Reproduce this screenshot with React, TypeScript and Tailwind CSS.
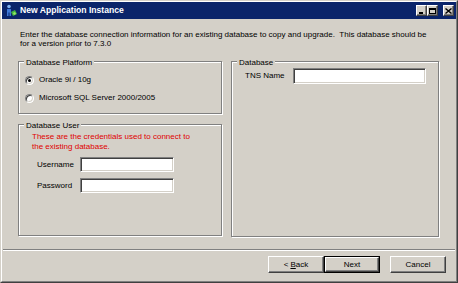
import React from 'react';

const raised =
  'border border-t-white border-l-white border-r-[#404040] border-b-[#404040] shadow-[inset_-1px_-1px_0_#808080]';
const sunken =
  'bg-white border border-t-[#808080] border-l-[#808080] border-r-white border-b-white shadow-[inset_1px_1px_0_#404040,inset_-1px_-1px_0_#d4d0c8]';

type GroupProps = { title: string; className?: string; children?: React.ReactNode };

const GroupBox = ({ title, className = '', children }: GroupProps) => (
  <div
    className={`relative border border-[#808080] shadow-[inset_1px_1px_0_#fff,1px_1px_0_#fff] ${className}`}
  >
    <span className="absolute -top-[4px] left-[5px] px-[2px] bg-[#d4d0c8] leading-[9px]">{title}</span>
    {children}
  </div>
);

const Radio = ({ label, checked }: { label: string; checked?: boolean }) => (
  <div className="flex items-center h-[10px]">
    <span
      className={`w-[9px] h-[9px] rounded-full flex items-center justify-center ${sunken}`}
    >
      {checked && <span className="w-[3px] h-[3px] rounded-full bg-black" />}
    </span>
    <span className="ml-[5px] whitespace-nowrap">{label}</span>
  </div>
);

const Button = ({ children, isDefault }: { children: React.ReactNode; isDefault?: boolean }) => (
  <div className={`w-[56px] h-[17px] ${isDefault ? 'border border-black' : ''}`}>
    <div className={`w-full h-full flex items-center justify-center bg-[#d4d0c8] ${raised}`}>
      {children}
    </div>
  </div>
);

const CaptionButton = ({ children }: { children: React.ReactNode }) => (
  <div className={`w-[11px] h-[11px] bg-[#d4d0c8] flex items-center justify-center ${raised}`}>
    {children}
  </div>
);

export default function App() {
  return (
    <div className="w-[458px] h-[283px] bg-[#d4d0c8] border border-t-[#d4d0c8] border-l-[#d4d0c8] border-r-[#404040] border-b-[#404040] font-['Liberation_Sans',Arial,sans-serif] text-[8px] text-black">
      <div className="w-full h-full flex flex-col border border-t-white border-l-white border-r-[#808080] border-b-[#808080]">
        {/* title bar */}
        <div className="h-[17px] bg-[#0a246a] flex items-center pl-[3px] pr-[2px]">
          <svg width="13" height="13" viewBox="0 0 13 13">
            <circle cx="4" cy="2.5" r="1.8" fill="#7fb2f0" />
            <path d="M2 5h4v7H4.5V8.5h-1V12H2z" fill="#3d78d8" />
            <path d="M6 8l4-2 2 4-4 2z" fill="#3fb83f" />
            <path d="M8 9l2-1 1 2-2 1z" fill="#9be36b" />
          </svg>
          <span className="ml-[2px] text-white font-bold text-[8.6px] leading-none whitespace-nowrap">
            New Application Instance
          </span>
          <div className="ml-auto flex items-center">
            <CaptionButton>
              <span className="w-[4px] h-[2px] bg-black mt-[4px] -ml-[2px]" />
            </CaptionButton>
            <CaptionButton>
              <span className="w-[7px] h-[6px] border border-black border-t-2" />
            </CaptionButton>
            <div className="ml-[5px]">
              <CaptionButton>
                <svg width="7" height="6" viewBox="0 0 7 6">
                  <path d="M0.5 0.5L6.5 5.5M6.5 0.5L0.5 5.5" stroke="#000" strokeWidth="1.4" />
                </svg>
              </CaptionButton>
            </div>
          </div>
        </div>

        {/* body */}
        <div className="flex flex-col pl-[16px]">
          <p className="mt-[11px] pl-[2px] leading-[9px] whitespace-nowrap">
            Enter the database connection information for an existing database to copy and
            upgrade.{'\u00a0\u00a0'}This database should be
            <br />
            for a version prior to 7.3.0
          </p>

          <div className="mt-[13px] flex items-start">
            <div className="w-[204px] flex flex-col">
              <GroupBox title="Database Platform" className="h-[53px] pt-[13px] pl-[6px] flex flex-col gap-[8px]">
                <Radio label="Oracle 9i / 10g" checked />
                <Radio label="Microsoft SQL Server 2000/2005" />
              </GroupBox>

              <GroupBox title="Database User" className="mt-[10px] h-[112px] pt-[7px] flex flex-col">
                <p className="pl-[13px] leading-[10px] text-[#e00000]">
                  These are the credentials used to connect to
                  <br />
                  the existing database.
                </p>
                <div className="mt-[5px] pl-[18px] flex items-center">
                  <span className="w-[43px]">Username</span>
                  <div className={`w-[94px] h-[15px] ${sunken}`} />
                </div>
                <div className="mt-[6px] pl-[18px] flex items-center">
                  <span className="w-[43px]">Password</span>
                  <div className={`w-[94px] h-[15px] ${sunken}`} />
                </div>
              </GroupBox>
            </div>

            <GroupBox title="Database" className="ml-[9px] w-[208px] h-[176px] pt-[6px] pl-[13px]">
              <div className="flex items-center">
                <span className="w-[48px]">TNS Name</span>
                <div className={`w-[133px] h-[16px] ${sunken}`} />
              </div>
            </GroupBox>
          </div>
        </div>

        <div className="mt-[12px] mx-[1px] border-t border-t-[#808080] border-b border-b-white" />

        <div className="mt-[5px] pr-[10px] flex justify-end">
          <Button>
            &lt; <span className="underline ml-[2px]">B</span>ack
          </Button>
          <Button isDefault>Next</Button>
          <div className="ml-[10px]">
            <Button>Cancel</Button>
          </div>
        </div>
      </div>
    </div>
  );
}
